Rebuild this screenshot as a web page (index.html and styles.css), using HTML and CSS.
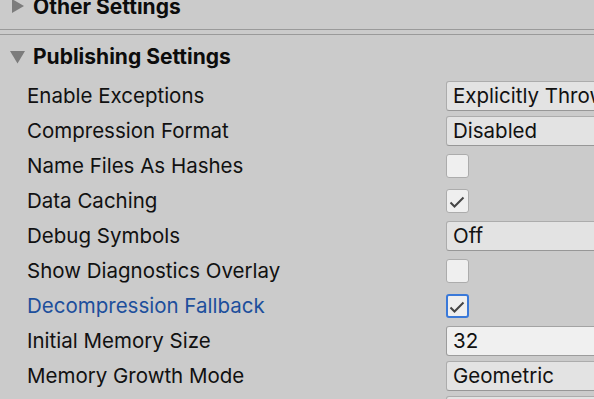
FILE: index.html
```html
<!DOCTYPE html>
<html lang="en">
<head>
    <meta charset="UTF-8">
    <title>Publishing Settings</title>
    <link rel="stylesheet" href="styles.css">
</head>
<body>
    <div class="panel">
        <!-- Collapsed section -->
        <div class="foldout foldout-closed">
            <svg class="arrow" width="16" height="16" viewBox="0 0 16 16"><path d="M3 1 L15 8 L3 15 Z"/></svg>
            <span>Other Settings</span>
        </div>
        <div class="section-end"></div>

        <!-- Expanded section -->
        <div class="foldout foldout-open">
            <svg class="arrow" width="16" height="16" viewBox="0 0 16 16"><path d="M1 2 L16 2 L8.5 14.5 Z"/></svg>
            <span>Publishing Settings</span>
        </div>

        <div class="fields">
            <div class="row">
                <label>Enable Exceptions</label>
                <div class="dropdown">Explicitly Thrown Exceptions Only</div>
            </div>
            <div class="row">
                <label>Compression Format</label>
                <div class="dropdown">Disabled</div>
            </div>
            <div class="row">
                <label>Name Files As Hashes</label>
                <div class="toggle"></div>
            </div>
            <div class="row">
                <label>Data Caching</label>
                <div class="toggle">
                    <svg width="21" height="22" viewBox="0 0 21 22"><path d="M3.5 12.5 L7.5 16.5 L16.5 7.5"/></svg>
                </div>
            </div>
            <div class="row">
                <label>Debug Symbols</label>
                <div class="dropdown">Off</div>
            </div>
            <div class="row">
                <label>Show Diagnostics Overlay</label>
                <div class="toggle"></div>
            </div>
            <div class="row focused">
                <label>Decompression Fallback</label>
                <div class="toggle">
                    <svg width="21" height="22" viewBox="0 0 21 22"><path d="M3.5 12.5 L7.5 16.5 L16.5 7.5"/></svg>
                </div>
            </div>
            <div class="row">
                <label>Initial Memory Size</label>
                <div class="textfield">32</div>
            </div>
            <div class="row">
                <label>Memory Growth Mode</label>
                <div class="dropdown">Geometric</div>
            </div>
            <!-- next row, scrolled below the fold -->
            <div class="row">
                <label></label>
                <div class="dropdown"></div>
            </div>
        </div>
    </div>
</body>
</html>
```

FILE: styles.css
```css
body {
    margin: 0;
    background: #cbcbcb;
    font-family: Inter, "Noto Sans", sans-serif;
    font-size: 20.5px;
    color: #111;
    overflow: hidden;
    height: 399px;
}
.panel {
    margin-top: -8px;
}
.foldout {
    display: flex;
    align-items: center;
    gap: 8px;
    padding-left: 9px;
    font-size: 21px;
    font-weight: 700;
    color: #0c0c0c;
}
.foldout-closed {
    height: 28px;
    padding-bottom: 9px;
    border-bottom: 1px solid #9a9a9a;
}
.section-end {
    height: 4px;
    border-bottom: 1px solid #9a9a9a;
}
.foldout-open {
    height: 43px;
}
.arrow {
    fill: #7c7c7c;
    flex: none;
}
.fields {
    display: flex;
    flex-direction: column;
}
.row {
    display: grid;
    grid-template-columns: 419px 220px;
    align-items: center;
    height: 35px;
    padding-left: 27px;
}
.row label {
    white-space: nowrap;
}
.row.focused label {
    color: #1d4f9c;
}
.dropdown, .textfield {
    box-sizing: border-box;
    height: 30px;
    line-height: 28px;
    padding-left: 6px;
    border: 1px solid #acacac;
    border-bottom-color: #979797;
    border-radius: 3px;
    background: #e3e3e3;
    white-space: nowrap;
    overflow: hidden;
}
.textfield {
    background: #f0f0f0;
    border-color: #9c9c9c;
    border-top-color: #a3a3a3;
}
.toggle {
    box-sizing: border-box;
    width: 23px;
    height: 24px;
    border: 1px solid #acacac;
    border-radius: 3px;
    background: #efefef;
}
.toggle svg {
    display: block;
    fill: none;
    stroke: #444;
    stroke-width: 2;
}
.row.focused .toggle {
    border: 2px solid #3a79d9;
}
.row.focused .toggle svg {
    margin: -1px;
}
```
